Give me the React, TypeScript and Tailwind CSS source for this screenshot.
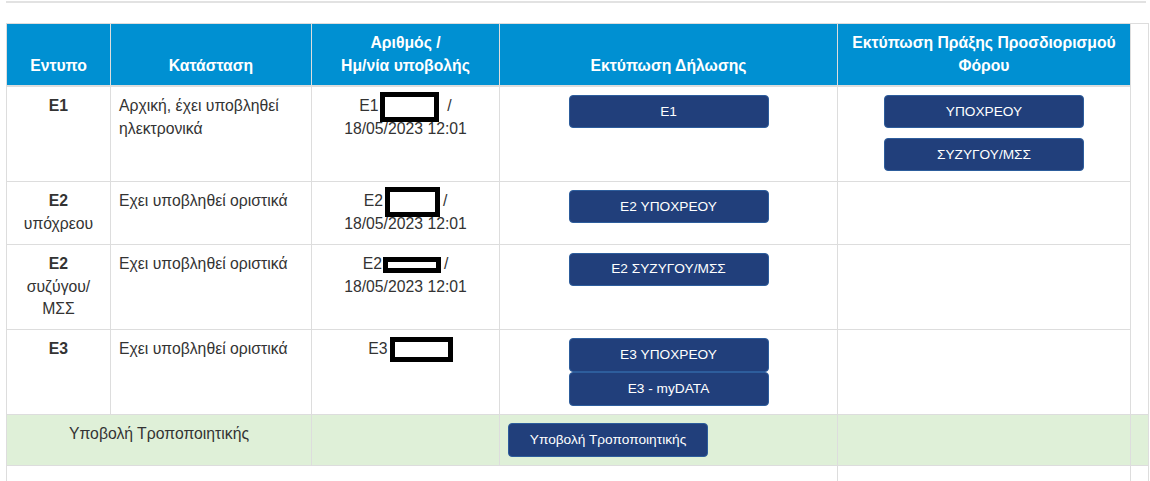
import React from 'react';

const cell = 'border border-[#ddd] px-2 py-2 align-top';
const head = 'border border-[#ddd] border-b-2 bg-[#0090d2] px-2 py-2 align-bottom text-center font-bold text-white';

function Btn({ children, className = '' }: { children: React.ReactNode; className?: string }) {
  return (
    <button
      className={`block w-[200px] rounded-[4px] border border-[#2d5d9c] bg-[#213f7b] text-[13.7px] leading-[18px] text-white ${className}`}
    >
      {children}
    </button>
  );
}

function Redact({ w, h, className = '' }: { w: string; h: string; className?: string }) {
  return <span className={`inline-block align-middle border-[5px] border-black bg-white ${w} ${h} ${className}`} />;
}

export default function App() {
  return (
    <div className="min-h-[481px] bg-white pl-[6px] font-['Liberation_Sans',Arial,sans-serif] text-[15.75px] leading-[22.7px] text-[#333]">
      <div className="mt-[1px] h-[2px] w-[1140px] bg-[#e2e2e2]" />

      <table className="mt-[20px] w-[1142px] table-fixed border-collapse">
        <colgroup>
          <col className="w-[104px]" />
          <col className="w-[201px]" />
          <col className="w-[188px]" />
          <col className="w-[338px]" />
          <col className="w-[293px]" />
          <col className="w-[18px]" />
        </colgroup>
        <tbody>
          <tr>
            <th className={head}>Εντυπο</th>
            <th className={head}>Κατάσταση</th>
            <th className={head}>
              Αριθμός /<br />
              Ημ/νία υποβολής
            </th>
            <th className={head}>Εκτύπωση Δήλωσης</th>
            <th className={head}>
              Εκτύπωση Πράξης Προσδιορισμού
              <br />
              Φόρου
            </th>
            <td rowSpan={5} className="border border-[#ddd] bg-white" />
          </tr>

          {/* E1 */}
          <tr>
            <td className={`${cell} text-center font-bold`}>E1</td>
            <td className={cell}>
              Αρχική, έχει υποβληθεί
              <br />
              ηλεκτρονικά
            </td>
            <td className={`${cell} text-center`}>
              E1
              <Redact w="w-[59px]" h="h-[30px]" className="-my-[4px] ml-[1px]" /> &nbsp;/
              <br />
              18/05/2023 12:01
            </td>
            <td className={cell}>
              <Btn className="mx-auto h-[33px]">E1</Btn>
            </td>
            <td className={`${cell} pb-[10px]`}>
              <Btn className="mx-auto h-[33px]">ΥΠΟΧΡΕΟΥ</Btn>
              <Btn className="mx-auto mt-[10px] h-[33px]">ΣΥΖΥΓΟΥ/ΜΣΣ</Btn>
            </td>
          </tr>

          {/* E2 υπόχρεου */}
          <tr>
            <td className={`${cell} text-center`}>
              <span className="font-bold">E2</span>
              <br />
              υπόχρεου
            </td>
            <td className={cell}>Εχει υποβληθεί οριστικά</td>
            <td className={`${cell} text-center`}>
              E2
              <Redact w="w-[55px]" h="h-[30px]" className="-my-[4px] ml-[2px]" />
              <span className="ml-[3px]">/</span>
              <br />
              18/05/2023 12:01
            </td>
            <td className={cell}>
              <Btn className="mx-auto h-[33px]">E2 ΥΠΟΧΡΕΟΥ</Btn>
            </td>
            <td className={cell} />
          </tr>

          {/* E2 συζύγου */}
          <tr>
            <td className={`${cell} text-center`}>
              <span className="font-bold">E2</span>
              <br />
              συζύγου/
              <br />
              ΜΣΣ
            </td>
            <td className={cell}>Εχει υποβληθεί οριστικά</td>
            <td className={`${cell} text-center`}>
              E2
              <Redact w="w-[58px]" h="h-[16px]" className="ml-[1px]" />
              <span className="ml-[3px]">/</span>
              <br />
              18/05/2023 12:01
            </td>
            <td className={cell}>
              <Btn className="mx-auto h-[33px]">E2 ΣΥΖΥΓΟΥ/ΜΣΣ</Btn>
            </td>
            <td className={cell} />
          </tr>

          {/* E3 */}
          <tr>
            <td className={`${cell} text-center font-bold`}>E3</td>
            <td className={cell}>Εχει υποβληθεί οριστικά</td>
            <td className={`${cell} text-center`}>
              <span className="pl-[10px]">E3</span>
              <Redact w="w-[63px]" h="h-[25px]" className="-my-[2px] ml-[2px]" />
            </td>
            <td className={cell}>
              <Btn className="mx-auto h-[34px]">E3 ΥΠΟΧΡΕΟΥ</Btn>
              <Btn className="mx-auto h-[34px]">E3 - myDATA</Btn>
            </td>
            <td className={cell} />
          </tr>

          {/* Τροποποιητική */}
          <tr className="bg-[#dff0d8]">
            <td colSpan={2} className={`${cell} text-center`}>
              Υποβολή Τροποποιητικής
            </td>
            <td className={cell} />
            <td className={cell}>
              <Btn className="h-[34px]">Υποβολή Τροποποιητικής</Btn>
            </td>
            <td className={cell} />
            <td className="border border-[#ddd]" />
          </tr>

          <tr>
            <td colSpan={4} className="h-[20px] border border-[#ddd]" />
            <td className="border border-[#ddd]" />
            <td className="border border-[#ddd]" />
          </tr>
        </tbody>
      </table>
    </div>
  );
}
